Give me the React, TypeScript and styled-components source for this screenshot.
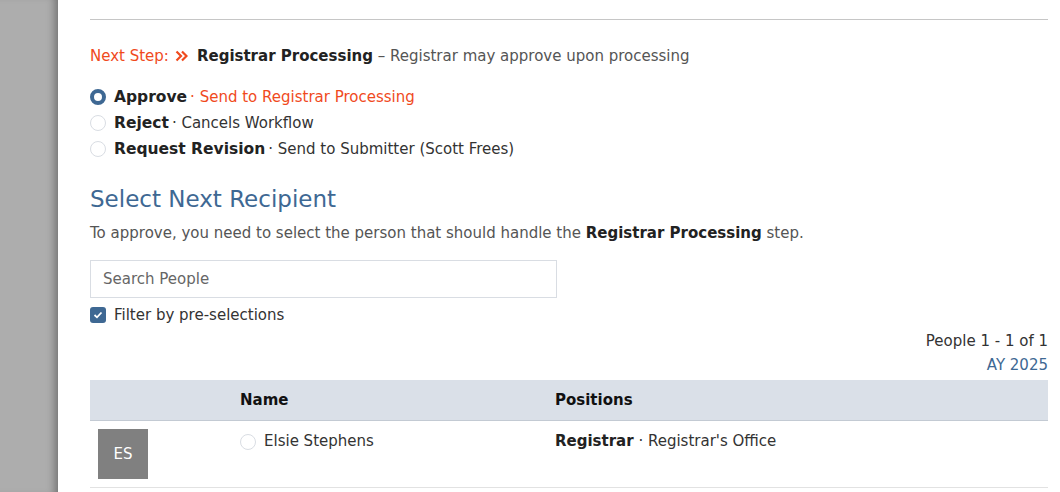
import React from "react";
import styled, { createGlobalStyle } from "styled-components";

const GlobalStyle = createGlobalStyle`
  html, body { margin: 0; padding: 0; background: #fff; }
  body { font-family: "DejaVu Sans", "Liberation Sans", sans-serif; color: #333; }
  * { box-sizing: border-box; }
`;

const Page = styled.div`
  display: flex;
  height: 492px;
  overflow: hidden;
`;

const Sidebar = styled.div`
  width: 58px;
  flex: none;
  background: #adadad;
  box-shadow: inset -9px 0 8px -6px rgba(0, 0, 0, 0.35);
`;

const Panel = styled.div`
  flex: 1;
  padding: 19px 12px 0 32px;
  display: flex;
  flex-direction: column;
  & > * { flex-shrink: 0; }
`;

const Divider = styled.hr`
  margin: 0;
  border: none;
  border-top: 1px solid #c6c6c6;
`;

const NextStep = styled.div`
  margin-top: 26px;
  display: flex;
  align-items: center;
  font-size: 15px;
  line-height: 20px;
  color: #555;
  white-space: nowrap;
`;

const Accent = styled.span`
  color: #f04a1d;
`;

const Chevrons = styled.svg`
  margin: 0 9px 0 6px;
`;

const Strong = styled.b`
  color: #222;
  font-weight: 700;
`;

const Options = styled.div`
  margin-top: 18px;
  display: flex;
  flex-direction: column;
`;

const OptionRow = styled.label`
  display: flex;
  align-items: center;
  height: 26px;
  font-size: 15px;
  color: #333;
  white-space: nowrap;
`;

const Radio = styled.span<{ $checked?: boolean }>`
  width: 16px;
  height: 16px;
  border-radius: 50%;
  flex: none;
  margin-right: 8px;
  background: #fff;
  border: ${(p) => (p.$checked ? "4.5px solid #3e6893" : "1px solid #d9dde3")};
`;

const OptionLabel = styled.b`
  font-weight: 700;
  color: #222;
  font-size: 15.5px;
`;

const Dot = styled.span<{ $accent?: boolean }>`
  margin-left: 3px;
  color: ${(p) => (p.$accent ? "#f04a1d" : "#333")};
`;

const Heading = styled.h2`
  margin: 22px 0 0;
  font-size: 23px;
  line-height: 30px;
  font-weight: 400;
  color: #3e6893;
`;

const Description = styled.p`
  margin: 9px 0 0;
  font-size: 15px;
  line-height: 20px;
  color: #555;
`;

const Search = styled.input`
  margin-top: 17px;
  width: 467px;
  height: 38px;
  border: 1px solid #d9dde3;
  padding: 0 12px;
  font-family: inherit;
  font-size: 15px;
  color: #333;
  outline: none;
  &::placeholder { color: #666; }
`;

const CheckRow = styled.label`
  margin-top: 8px;
  display: flex;
  align-items: center;
  height: 18px;
  font-size: 15px;
  color: #333;
`;

const CheckBox = styled.span`
  width: 16px;
  height: 16px;
  border-radius: 3px;
  background: #3e6893;
  margin-right: 8px;
  display: flex;
  align-items: center;
  justify-content: center;
`;

const Meta = styled.div`
  margin-top: 5px;
  display: flex;
  flex-direction: column;
  align-items: flex-end;
  font-size: 15px;
  line-height: 24px;
  color: #333;
`;

const Year = styled.span`
  color: #3e6893;
`;

const Table = styled.div`
  margin-top: 3px;
  display: grid;
  grid-template-columns: 150px 315px 1fr;
`;

const HeadCell = styled.div`
  height: 41px;
  background: #dae0e8;
  border-bottom: 1px solid #c3cad3;
  display: flex;
  align-items: center;
  font-weight: 700;
  font-size: 15px;
  color: #111;
`;

const Cell = styled.div`
  height: 67px;
  border-bottom: 1px solid #e2e2e2;
  padding-top: 11px;
  display: flex;
  align-items: flex-start;
  font-size: 15px;
  color: #333;
  white-space: nowrap;
`;

const AvatarCell = styled(Cell)`
  padding: 8px 0 0 8px;
`;

const Avatar = styled.div`
  width: 50px;
  height: 50px;
  background: #808080;
  color: #fff;
  display: flex;
  align-items: center;
  justify-content: center;
  font-size: 15px;
`;

const RowRadio = styled(Radio)`
  margin-right: 8px;
  margin-top: 2px;
`;

export default function App() {
  return (
    <>
      <GlobalStyle />
      <Page>
        <Sidebar />
        <Panel>
          <Divider />
          <NextStep>
            <Accent>Next Step:</Accent>
            <Chevrons width="13" height="12" viewBox="0 0 13 12">
              <path d="M1.5 1.5 L6 6 L1.5 10.5 M7 1.5 L11.5 6 L7 10.5" fill="none" stroke="#f04a1d" strokeWidth="2.2" />
            </Chevrons>
            <Strong>Registrar Processing</Strong>
            <span>&nbsp;–&nbsp;Registrar may approve upon processing</span>
          </NextStep>
          <Options>
            <OptionRow>
              <Radio $checked />
              <OptionLabel>Approve</OptionLabel>
              <Dot $accent>· Send to Registrar Processing</Dot>
            </OptionRow>
            <OptionRow>
              <Radio />
              <OptionLabel>Reject</OptionLabel>
              <Dot>· Cancels Workflow</Dot>
            </OptionRow>
            <OptionRow>
              <Radio />
              <OptionLabel>Request Revision</OptionLabel>
              <Dot>· Send to Submitter (Scott Frees)</Dot>
            </OptionRow>
          </Options>
          <Heading>Select Next Recipient</Heading>
          <Description>
            To approve, you need to select the person that should handle the <Strong>Registrar Processing</Strong> step.
          </Description>
          <Search placeholder="Search People" />
          <CheckRow>
            <CheckBox>
              <svg width="10" height="8" viewBox="0 0 10 8">
                <path d="M1.5 4 L4 6.3 L8.5 1.5" fill="none" stroke="#fff" strokeWidth="1.8" />
              </svg>
            </CheckBox>
            Filter by pre-selections
          </CheckRow>
          <Meta>
            <span>People 1 - 1 of 1</span>
            <Year>AY 2025</Year>
          </Meta>
          <Table>
            <HeadCell />
            <HeadCell>Name</HeadCell>
            <HeadCell>Positions</HeadCell>
            <AvatarCell>
              <Avatar>ES</Avatar>
            </AvatarCell>
            <Cell>
              <RowRadio />
              Elsie Stephens
            </Cell>
            <Cell>
              <Strong>Registrar</Strong>&nbsp;· Registrar's Office
            </Cell>
          </Table>
        </Panel>
      </Page>
    </>
  );
}
